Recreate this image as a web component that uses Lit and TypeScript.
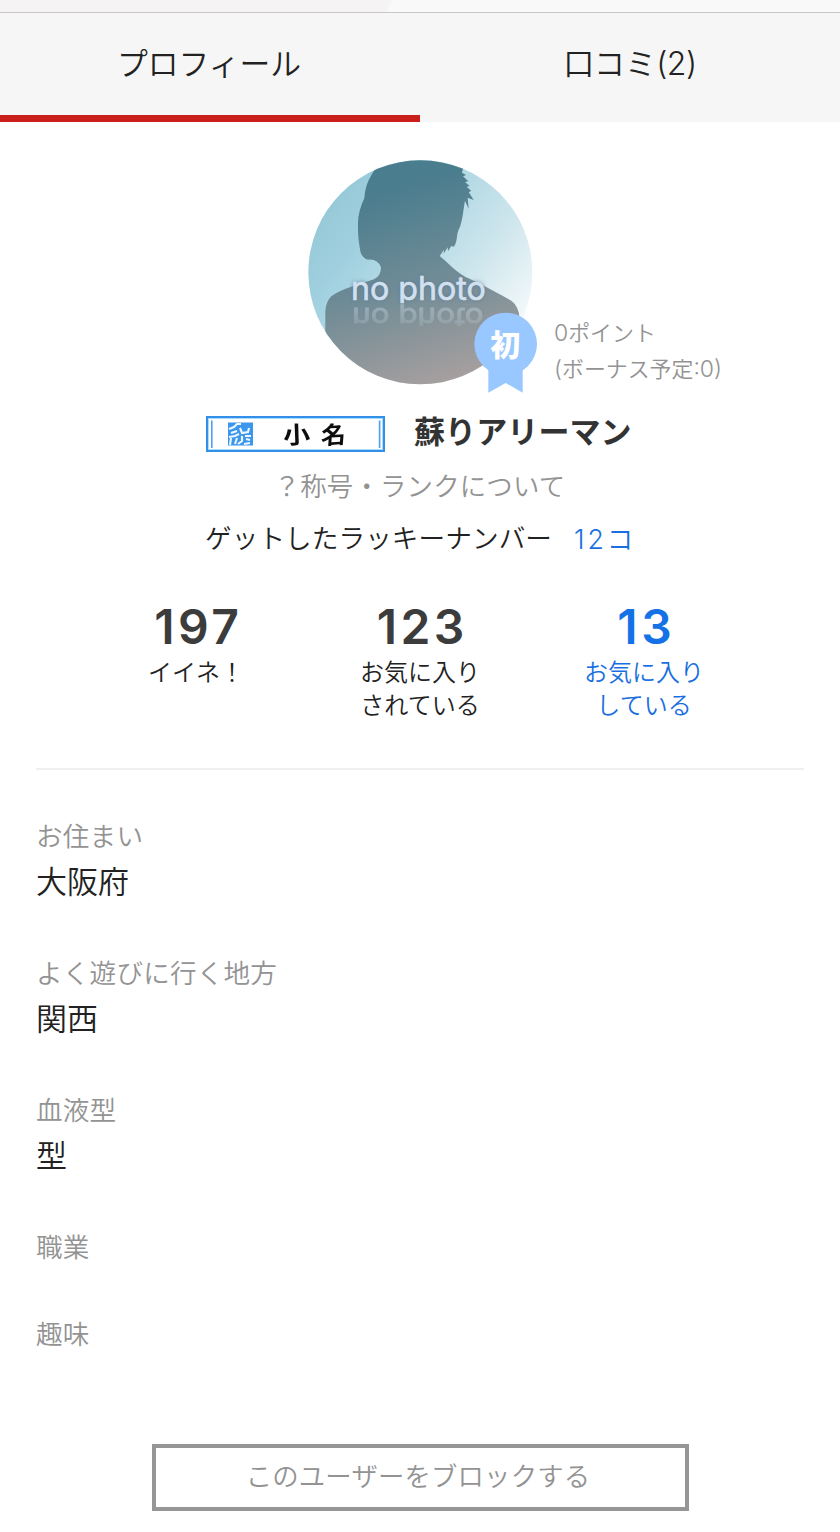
import { LitElement, html, css } from "lit";
import { customElement, property } from "lit/decorators.js";

@customElement("user-avatar")
class UserAvatar extends LitElement {
  static styles = css`
    :host { display: block; position: relative; width: 250px; height: 250px; }
    svg { display: block; width: 250px; height: 250px; }
    .np { font-family: Inter, "Open Sans", sans-serif; font-size: 99px; font-weight: 400; fill: #d3e0ee; }
    .halo { fill: #55779c; }
    .mark { font-family: "Noto Sans CJK JP", sans-serif; font-size: 90px; font-weight: 900; fill: #fff; }
  `;
  render() {
    return html`<svg viewBox="0 0 750 750">
      <defs>
        <linearGradient id="sky" x1="0.1" y1="0.1" x2="0.95" y2="0.75">
          <stop offset="0" stop-color="#92c6d4" /><stop offset="0.25" stop-color="#a0d0df" />
          <stop offset="0.65" stop-color="#cde5ec" /><stop offset="1" stop-color="#ffffff" />
        </linearGradient>
        <linearGradient id="man" gradientUnits="userSpaceOnUse" x1="270" y1="120" x2="450" y2="690">
          <stop offset="0" stop-color="#4a7d8e" /><stop offset="0.5" stop-color="#718c96" />
          <stop offset="1" stop-color="#a69f9f" />
        </linearGradient>
        <linearGradient id="fade" gradientUnits="userSpaceOnUse" x1="0" y1="465" x2="0" y2="530">
          <stop offset="0" stop-color="#fff" stop-opacity="0.4" /><stop offset="1" stop-color="#fff" stop-opacity="0.15" />
        </linearGradient>
        <mask id="fm" maskUnits="userSpaceOnUse" x="100" y="463" width="520" height="66"><rect x="100" y="463" width="520" height="66" fill="url(#fade)" /></mask>
        <clipPath id="round"><circle cx="361" cy="367" r="336" /></clipPath>
        <clipPath id="upper"><rect x="100" y="350" width="520" height="110" /></clipPath>
        <filter id="glow" x="-10%" y="-40%" width="120%" height="180%"><feGaussianBlur stdDeviation="7" /></filter>
      </defs>
      <g clip-path="url(#round)">
        <rect width="750" height="750" fill="url(#sky)" />
        <path fill="url(#man)" d="M222 62C203 92 196 110 193 145C180 172 173 200 174 224C173 260 178 286 182 308Q190 328 206 329Q233 327 243 352Q243 378 222 388C180 402 125 416 94 439Q78 455 76 482L75 750H670L657 490Q650 458 625 447C575 418 525 393 495 380C460 360 440 334 419 318L432 299L431 311L443 292L444 304L454 288L462 290C475 270 466 255 480 230C490 200 490 175 495 152L506 177L503 143L521 150L506 126L514 123L500 110L509 108L495 96L505 94L489 79L498 75L486 68L490 50L400 20H260Z" />
        <g clip-path="url(#upper)">
          <text class="np halo" x="153" y="449" textLength="404" lengthAdjust="spacingAndGlyphs" filter="url(#glow)" aria-hidden="true">no photo</text>
          <text class="np" x="153" y="449" textLength="404" lengthAdjust="spacingAndGlyphs" stroke="#d3e0ee" stroke-width="2">no photo</text>
        </g>
        <g mask="url(#fm)"><text class="np" transform="translate(0 473) scale(1 -0.82)" x="157" y="0" textLength="394" lengthAdjust="spacingAndGlyphs" stroke="#d3e0ee" stroke-width="3" aria-hidden="true">no photo</text></g>
      </g>
      <path fill="#99c7ff" d="M565 640H668V728L617 699L565 728Z" />
      <circle cx="617" cy="582" r="94" fill="#99c7ff" />
      <text class="mark" x="571" y="618">初</text>
    </svg>`;
  }
}

@customElement("rank-plate")
class RankPlate extends LitElement {
  static styles = css`
    :host { display: block; width: 180px; height: 36px; }
    svg { display: block; width: 180px; height: 36px; overflow: visible; }
    .brush { font-family: "Noto Sans CJK JP", sans-serif; font-size: 24px; font-weight: 700; fill: #111; }
  `;
  render() {
    return html`<svg viewBox="0 0 180 36">
      <defs><filter id="soft"><feGaussianBlur stdDeviation="0.6" /></filter></defs>
      <rect x="1" y="1" width="177" height="34" fill="#fff" stroke="#3390e8" stroke-width="2" />
      <rect x="2.5" y="2.5" width="174" height="31" fill="none" stroke="#a9dcff" stroke-width="1" />
      <path d="M5.8 4.5V32M173.6 4.5V32" stroke="#4f9fec" stroke-width="1.6" />
      <rect x="22" y="6.5" width="25" height="23" fill="#3b97ee" />
      <path filter="url(#soft)" d="M23 13L28 11L31 8L35 8M25 17L31 15M34 12L36 17L42 16L43 12M23 21L29 20L33 18M25 22L24 29M31 22L29 28M36 20V25L32 28M39 20H45M40 23L44 24M38 28L44 27" fill="none" stroke="#eef7ff" stroke-width="2.1" />
      <g filter="url(#soft)">
        <text class="brush" x="0" y="0" transform="translate(77.5 28) rotate(-2)" textLength="27" lengthAdjust="spacingAndGlyphs">小</text>
        <text class="brush" x="0" y="0" transform="translate(114.5 28.5) skewY(-4) skewX(-4)" textLength="25" lengthAdjust="spacingAndGlyphs">名</text>
      </g>
    </svg>`;
  }
}

@customElement("stat-item")
class StatItem extends LitElement {
  @property() value = "";
  @property() label = "";
  @property({ type: Boolean, reflect: true }) link = false;
  static styles = css`
    :host { display: block; width: 224px; text-align: center; color: #222; }
    :host([link]) { color: #1a6fe0; }
    .value { font: 600 48px/40px Inter, sans-serif; height: 47px; letter-spacing: 3.5px; text-indent: 4.5px; color: #3c3c3c; }
    :host([link]) .value { color: #1472e6; }
    .label { font: 350 24px/33px "Noto Sans CJK JP", sans-serif; white-space: pre-line; }
  `;
  render() {
    return html`<div class="value">${this.value}</div><div class="label">${this.label}</div>`;
  }
}

@customElement("app-root")
class AppRoot extends LitElement {
  static styles = css`
    :host { display: block; height: 1532px; overflow: hidden; background: #fff; color: #222;
      font-family: "Noto Sans CJK JP", sans-serif; font-weight: 350; }
    .top { height: 12px; background: linear-gradient(115deg, #f5f3f3 0 355px, #f9f9f9 356px); border-bottom: 1px solid #c8c8c8; }
    .tabs { display: grid; grid-template-columns: 420px 420px; height: 109px; background: #f6f6f6; }
    .tab { box-sizing: border-box; text-align: center; font-size: 31px; line-height: 97px; border-bottom: 7px solid transparent; white-space: nowrap; }
    .active { border-color: #cb1f1c; padding-right: 2px; font-size: 30.8px; }
    .lat { font-family: Inter, sans-serif; font-weight: 300; line-height: 1; }
    .tab .lat { font-size: 32px; letter-spacing: -.4px; }
    .hero { display: grid; grid-template-columns: 300px 250px 1fr; padding-top: 28px; height: 250px; }
    .points { align-self: end; padding: 0 0 14px 4px; font-size: 21.9px; line-height: 36px; color: #939393; white-space: nowrap; }
    .points .lat { font-size: 23px; }
    .name { display: flex; align-items: flex-start; margin: 16px 0 0 206px; height: 37px; gap: 28px; }
    .nick { font-size: 31px; font-weight: 700; line-height: 40px; margin-top: -6px; color: #333; letter-spacing: .1px; white-space: nowrap; }
    .rank { margin-top: 13px; text-align: center; font-size: 26.4px; line-height: 38px; color: #939393; letter-spacing: .2px; padding-right: 1px; }
    .lucky { display: flex; gap: 22px; font-size: 26.6px; letter-spacing: .1px; line-height: 38px; margin: 14px 0 0 205px; white-space: nowrap; }
    .count { color: #1a6fe0; padding-top: 1px; }
    .count .lat { letter-spacing: 3px; }
    .stats { display: flex; justify-content: center; margin-top: 49px; height: 162px; }
    .stats stat-item { margin-top: 1px; }
    .rule { height: 2px; background: #efefef; margin: 0 36px; }
    .info { margin: 42px 0 0 36px; display: flex; flex-direction: column; }
    .key { font-size: 26.6px; line-height: 46px; color: #939393; height: 46px; letter-spacing: .2px; }
    .val { font-size: 31px; line-height: 44px; height: 46px; margin-bottom: 45px; }
    .empty { height: 41px; }
    .block { box-sizing: border-box; width: 537px; height: 67px; margin: 47px 0 0 152px; border: 4px solid #969696; background: #fff; color: #939393; text-align: center; font-size: 26.4px; line-height: 54px; letter-spacing: .15px; padding-right: 5px; }
  `;
  rows = [["お住まい", "大阪府"], ["よく遊びに行く地方", "関西"], ["血液型", "型"], ["職業", ""], ["趣味", ""]];
  render() {
    return html`
      <div class="top"></div>
      <nav class="tabs"><div class="tab active">プロフィール</div><div class="tab">口コミ<span class="lat">(2)</span></div></nav>
      <section class="hero"><span></span><user-avatar></user-avatar>
        <div class="points"><span class="lat">0</span>ポイント<br /><span class="lat">(</span>ボーナス予定<span class="lat">:0)</span></div>
      </section>
      <div class="name"><rank-plate></rank-plate><div class="nick">蘇りアリーマン</div></div>
      <div class="rank">？称号・ランクについて</div>
      <div class="lucky"><span>ゲットしたラッキーナンバー</span><span class="count"><span class="lat">12</span>コ</span></div>
      <section class="stats">
        <stat-item value="197" label="イイネ！"></stat-item>
        <stat-item value="123" label=${"お気に入り\nされている"}></stat-item>
        <stat-item link value="13" label=${"お気に入り\nしている"}></stat-item>
      </section>
      <div class="rule"></div>
      <section class="info">
        ${this.rows.map(([k, v]) => html`<div class="key">${k}</div>${v ? html`<div class="val">${v}</div>` : html`<div class="empty"></div>`}`)}
      </section>
      <div class="block">このユーザーをブロックする</div>`;
  }
}
